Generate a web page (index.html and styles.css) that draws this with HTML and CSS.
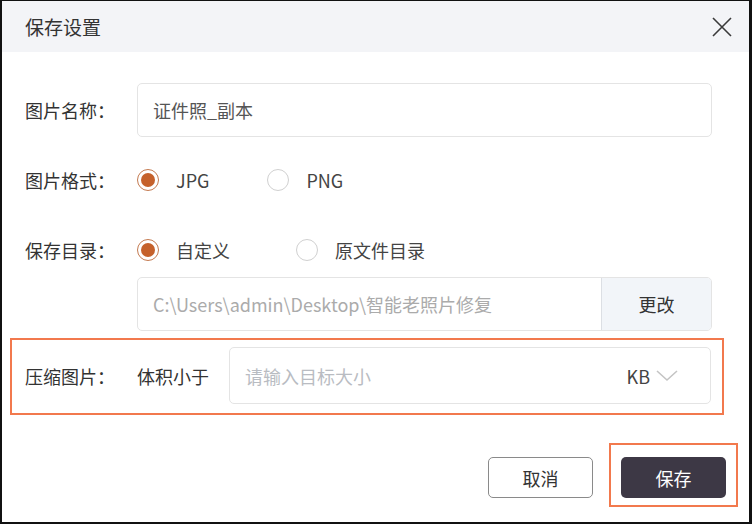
FILE: index.html
```html
<!DOCTYPE html>
<html lang="zh-CN">
<head>
<meta charset="utf-8">
<title>保存设置</title>
<link rel="stylesheet" href="styles.css">
</head>
<body>
<div class="dialog">
  <div class="header">
    <span class="title">保存设置</span>
    <svg class="close" width="22" height="22" viewBox="0 0 22 22"><path d="M2 2 L20 20 M20 2 L2 20" stroke="#3a3a3a" stroke-width="1.6" fill="none"/></svg>
  </div>
  <div class="body">
    <div class="row row-name">
      <span class="label">图片名称：</span>
      <div class="input">证件照_副本</div>
    </div>
    <div class="row row-format">
      <span class="label">图片格式：</span>
      <div class="options options-format">
        <span class="option"><span class="radio checked"></span>JPG</span>
        <span class="option"><span class="radio"></span>PNG</span>
      </div>
    </div>
    <div class="row row-dir">
      <span class="label">保存目录：</span>
      <div class="options options-dir">
        <span class="option"><span class="radio checked"></span>自定义</span>
        <span class="option"><span class="radio"></span>原文件目录</span>
      </div>
    </div>
    <div class="row row-path">
      <span class="label"></span>
      <div class="path-box">
        <span class="path">C:\Users\admin\Desktop\智能老照片修复</span>
        <span class="change">更改</span>
      </div>
    </div>
    <div class="compress">
      <span class="label">压缩图片：</span>
      <span class="sub">体积小于</span>
      <div class="size-input">
        <span class="placeholder">请输入目标大小</span>
        <span class="unit">KB</span>
        <svg class="chev" width="22" height="12" viewBox="0 0 22 12"><path d="M1 1 L11 10 L21 1" stroke="#c4c4c4" stroke-width="1.6" fill="none"/></svg>
      </div>
    </div>
  </div>
  <div class="footer">
    <button class="btn cancel">取消</button>
    <div class="save-wrap"><button class="btn save">保存</button></div>
  </div>
</div>
</body>
</html>
```
FILE: styles.css
```css
html, body {
  margin: 0;
  padding: 0;
  background: #ffffff;
}
body {
  font-family: "Noto Sans CJK SC", "Noto Sans", sans-serif;
  color: #333333;
}
.dialog {
  width: 752px;
  height: 524px;
  box-sizing: border-box;
  border-style: solid;
  border-color: #111111;
  border-width: 1px 3px 2px 2px;
  background: #ffffff;
  display: flex;
  flex-direction: column;
}
.header {
  height: 51px;
  background: #f3f4f7;
  display: flex;
  align-items: center;
  justify-content: space-between;
  padding: 0 16px 0 23px;
}
.title {
  font-size: 19px;
  color: #333;
}
.close {
  display: block;
}
.body {
  padding: 31px 37px 0 23px;
}
.row {
  display: flex;
  align-items: center;
}
.label {
  width: 112px;
  flex: none;
  font-size: 18px;
  color: #333;
}
.row-name { height: 54px; }
.row-format { height: 86px; }
.row-dir { height: 54px; }
.row-path { height: 54px; }
.input {
  flex: 1;
  height: 54px;
  box-sizing: border-box;
  border: 1px solid #e4e4e4;
  border-radius: 5px;
  padding: 0 15px;
  display: flex;
  align-items: center;
  font-size: 18px;
  color: #555;
}
.options {
  display: flex;
}
.options-format { gap: 58px; }
.options-dir { gap: 66px; }
.option {
  display: flex;
  align-items: center;
  font-size: 18px;
  color: #444;
}
.radio {
  width: 22px;
  height: 22px;
  box-sizing: border-box;
  border-radius: 50%;
  border: 1px solid #d0d0d0;
  margin-right: 17px;
  display: flex;
  align-items: center;
  justify-content: center;
}
.radio.checked {
  border: 1.5px solid #c47a50;
}
.radio.checked::after {
  content: "";
  width: 14px;
  height: 14px;
  border-radius: 50%;
  background: #c5612b;
}
.path-box {
  flex: 1;
  height: 54px;
  box-sizing: border-box;
  border: 1px solid #e4e4e4;
  border-radius: 5px;
  display: flex;
  overflow: hidden;
}
.path {
  flex: 1;
  display: flex;
  align-items: center;
  padding-left: 15px;
  font-size: 18px;
  color: #ababab;
}
.change {
  width: 109px;
  display: flex;
  align-items: center;
  justify-content: center;
  background: #f2f5f9;
  border-left: 1px solid #dcdfe4;
  font-size: 18px;
  color: #333;
}
.compress {
  margin: 7px -12px 0 -15px;
  height: 77px;
  box-sizing: border-box;
  border: 2px solid #f2794d;
  padding: 6px 11px 8px 13px;
  display: flex;
  align-items: center;
}
.sub {
  width: 92px;
  flex: none;
  font-size: 18px;
  color: #333;
}
.size-input {
  flex: 1;
  height: 57px;
  box-sizing: border-box;
  border: 1px solid #e4e4e4;
  border-radius: 5px;
  display: flex;
  align-items: center;
  padding: 0 32px 0 15px;
}
.placeholder {
  flex: 1;
  font-size: 18px;
  color: #b9bcc2;
}
.unit {
  font-size: 18px;
  color: #444;
  margin-right: 6px;
}
.chev {
  display: block;
}
.footer {
  margin-top: 28px;
  display: flex;
  justify-content: flex-end;
  align-items: flex-start;
  padding-right: 11px;
  gap: 16px;
}
.btn {
  width: 105px;
  height: 41px;
  box-sizing: border-box;
  border-radius: 5px;
  font-family: "Noto Sans CJK SC", "Noto Sans", sans-serif;
  font-size: 18px;
  padding: 0;
}
.cancel {
  margin-top: 14px;
  background: #ffffff;
  border: 1px solid #8a8a8a;
  color: #333;
}
.save-wrap {
  border: 2px solid #f2794d;
  padding: 12px 10px 7px 10px;
}
.save {
  display: block;
  background: #3d3845;
  border: none;
  color: #ffffff;
}
```
